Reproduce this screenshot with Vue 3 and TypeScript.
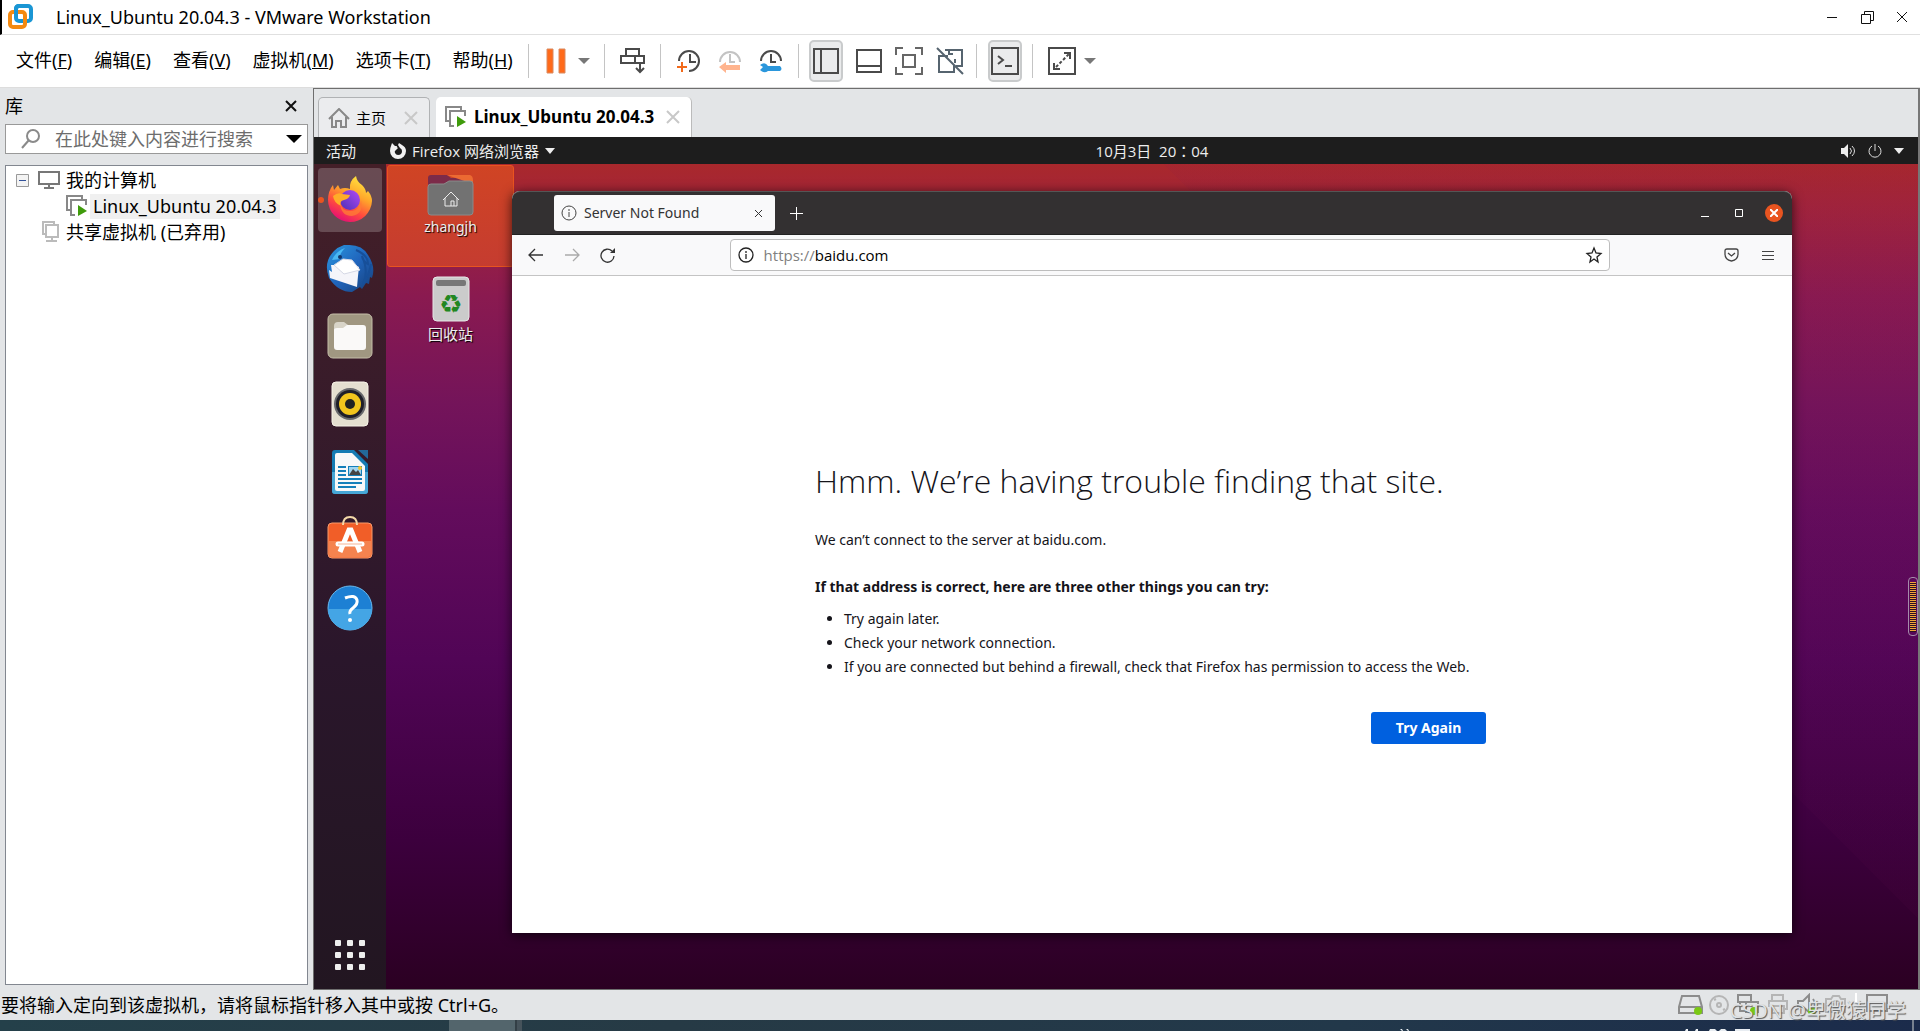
<script setup lang="ts">
import { ref } from 'vue'

interface MenuEntry {
  label: string
  hotkey: string
}

const menus: MenuEntry[] = [
  { label: '文件', hotkey: 'F' },
  { label: '编辑', hotkey: 'E' },
  { label: '查看', hotkey: 'V' },
  { label: '虚拟机', hotkey: 'M' },
  { label: '选项卡', hotkey: 'T' },
  { label: '帮助', hotkey: 'H' },
]

const tips: string[] = [
  'Try again later.',
  'Check your network connection.',
  'If you are connected but behind a firewall, check that Firefox has permission to access the Web.',
]

const search = ref('')
</script>

<template>
  <div class="app">
    <header class="titlebar">
      <svg class="logo" width="26" height="26" viewBox="0 0 26 26" fill="none">
        <rect x="8" y="2" width="15" height="15" rx="3" stroke="#1a96d4" stroke-width="4" />
        <rect x="2" y="8" width="15" height="15" rx="3" stroke="#f58a10" stroke-width="4" />
        <path d="M8 12V5q0-3 3-3h6" stroke="#1a96d4" stroke-width="4" />
      </svg>
      <h1>Linux_Ubuntu 20.04.3 - VMware Workstation</h1>
      <div class="wincontrols">
        <button aria-label="最小化"><svg width="12" height="12"><path d="M1 6.5h10" stroke="#111" /></svg></button>
        <button aria-label="还原"><svg width="14" height="14" fill="none" stroke="#111"><path d="M1.500 4.500h9v9h-9zM4.500 4.500v-3h9v9h-3" /></svg></button>
        <button aria-label="关闭"><svg width="12" height="12"><path d="M1 1l10 10M11 1L1 11" stroke="#111" /></svg></button>
      </div>
    </header>

    <nav class="menubar">
      <div class="menus">
        <button v-for="m in menus" :key="m.hotkey">{{ m.label }}(<u>{{ m.hotkey }}</u>)</button>
      </div>
      <div class="group">
        <button class="tool" aria-label="暂停"><svg width="26" height="26"><path d="M3 1h6v24H3zM15 1h6v24h-6z" fill="#ff6a1a" stroke="#d98a60" stroke-width="1" /></svg></button>
        <span class="caret"></span>
      </div>
      <div class="group">
        <button class="tool" aria-label="发送按键"><svg width="26" height="26" fill="none" stroke="#4a4a4a" stroke-width="2"><path d="M6 1h13v7H6zM1 8h14v7H1zM15 8h9v7h-9zM20 15v9M16 20l4 4 4-4" /></svg></button>
      </div>
      <div class="group clocks">
        <button class="tool" aria-label="拍摄快照"><svg width="26" height="26" fill="none" stroke-width="2"><path d="M3 13a10 10 0 1 1 10 10M14 6v8h6" stroke="#4a4a4a" /><path d="M1 19h10M6 14v10" stroke="#f26a1b" /></svg></button>
        <button class="tool" aria-label="恢复快照"><svg width="26" height="26" fill="none" stroke-width="2"><path d="M3 14a10 10 0 1 1 20 0M13 6v8h5" stroke="#c3c3c3" /><path d="M2 19l7-5v3h14v5H9v3z" fill="#ffb48e" /></svg></button>
        <button class="tool" aria-label="管理快照"><svg width="26" height="26" fill="none" stroke-width="2"><path d="M3 13a10 10 0 1 1 20 0M13 6v8h5" stroke="#4a4a4a" /><path d="M2 17l3 2-3 3q4 4 8 1h12q3-2 0-5H10q-3-5-8-1z" fill="#2b97dc" /></svg></button>
      </div>
      <div class="group views">
        <button class="tool pressed" aria-label="显示库"><svg width="26" height="26" fill="none" stroke="#4a4a4a" stroke-width="2"><path d="M1 1h24v24H1zM8 1v24" /></svg></button>
        <button class="tool" aria-label="缩略图"><svg width="26" height="26" fill="none" stroke="#4a4a4a" stroke-width="2"><path d="M1 2h24v22H1zM1 18h24" /></svg></button>
        <button class="tool" aria-label="全屏"><svg width="28" height="28" fill="none" stroke="#666" stroke-width="2"><path d="M1 8V1h7M20 1h7v7M27 20v7h-7M8 27H1v-7M8 8h12v12H8z" /></svg></button>
        <button class="tool" aria-label="Unity"><svg width="28" height="28" fill="none" stroke="#56646f" stroke-width="2"><path d="M9 3h17v16h-6M12 9H3v16h15v-7M1 1l26 26M13 3v4h4M19 12v4" /></svg></button>
      </div>
      <div class="group single">
        <button class="tool pressed" aria-label="控制台"><svg width="28" height="28" fill="none" stroke="#4a4a4a" stroke-width="2"><path d="M1 1h26v26H1zM7 9l5 4-5 4M14 19h7" /></svg></button>
      </div>
      <div class="group">
        <button class="tool" aria-label="拉伸"><svg width="28" height="28" fill="none" stroke="#4a4a4a" stroke-width="2"><path d="M1 1h26v26H1zM16 6h6v6M6 16v6h6" /><path d="M8 20L21 7" stroke-dasharray="3 2" /></svg></button>
        <span class="caret"></span>
      </div>
    </nav>

    <div class="workspace">
      <aside class="library">
        <div class="libhead">
          <h2>库</h2>
          <button aria-label="关闭库"><svg width="12" height="12"><path d="M1 1l10 10M11 1L1 11" stroke="#111" stroke-width="2" /></svg></button>
        </div>
        <label class="search">
          <svg width="22" height="22" fill="none" stroke="#8a8a8a" stroke-width="2"><circle cx="13" cy="8" r="6" /><path d="M9 12l-7 8" /></svg>
          <input v-model="search" type="text" placeholder="在此处键入内容进行搜索" aria-label="搜索" />
          <span class="drop"></span>
        </label>
        <ul class="tree">
          <li>
            <svg class="expander" width="13" height="13"><path d="M.5.5h12v12H.5z" fill="#f3f3f3" stroke="#999" /><path d="M3 6.500h7" stroke="#33529a" /></svg>
            <svg width="22" height="18" fill="none" stroke="#777" stroke-width="2"><path d="M1 1h20v12H1zM11 13v3M6 17h10" /></svg>
            <span>我的计算机</span>
          </li>
          <li class="vm">
            <svg width="22" height="22" fill="none" stroke="#888" stroke-width="2"><path d="M4 15H1V1h15v3M9 20H5V5h15v5" /><path d="M12 10l9 6-9 5z" fill="#3f9b0b" stroke="none" /></svg>
            <span class="selected">Linux_Ubuntu 20.04.3</span>
          </li>
          <li class="shared">
            <svg width="18" height="22" fill="none" stroke="#bbb" stroke-width="2"><path d="M4 13H1V1h11v3M4 4h12v12H4zM10 16v4M4 20h11" /></svg>
            <span>共享虚拟机 (已弃用)</span>
          </li>
        </ul>
      </aside>

      <main class="console">
        <div class="tabs">
          <div class="tab home">
            <svg width="22" height="20" fill="none" stroke="#888" stroke-width="2"><path d="M1 11L11 1l10 10M4 9v10h4v-6h5v6h5V9" /></svg>
            <span>主页</span>
            <button aria-label="关闭主页"><svg width="14" height="14"><path d="M1 1l12 12M13 1L1 13" stroke="#c8c8c8" stroke-width="2" /></svg></button>
          </div>
          <div class="tab active">
            <svg width="22" height="22" fill="none" stroke="#888" stroke-width="2"><path d="M4 15H1V1h15v3M9 20H5V5h15v5" /><path d="M12 10l9 6-9 5z" fill="#3f9b0b" stroke="none" /></svg>
            <span>Linux_Ubuntu 20.04.3</span>
            <button aria-label="关闭标签"><svg width="14" height="14"><path d="M1 1l12 12M13 1L1 13" stroke="#c8c8c8" stroke-width="2" /></svg></button>
          </div>
        </div>

        <div class="guest">
          <div class="panel">
            <div class="panelside">
              <span>活动</span>
              <span class="appmenu">
                <svg width="16" height="16" viewBox="0 0 16 16"><path fill="#f2f2f2" fill-rule="evenodd" d="M1 3l1-3 3 3h2q-1 1 1 2L6 7q-2 1-1 3 1 2 3 2 4 0 4-4 0-2-2-3L8 2l1-2 3 2q4 2 4 6a8 8 0 0 1-16 0Q0 5 1 3z" /></svg>
                Firefox 网络浏览器
                <svg width="10" height="6"><path d="M0 0h10L5 6z" fill="#eee" /></svg>
              </span>
            </div>
            <time>10月3日&nbsp; 20：04</time>
            <div class="panelside right">
              <svg width="15" height="14" fill="none" stroke="#ddd"><path d="M0 4h3l4-4v14L3 10H0z" fill="#eee" stroke="none" /><path d="M9 4q3 3 0 6M11 2q5 5 0 10" /></svg>
              <svg width="14" height="14" fill="none" stroke="#ddd"><path d="M4 2a6 6 0 1 0 6 0M7 0v7" /></svg>
              <svg width="10" height="6"><path d="M0 0h10L5 6z" fill="#eee" /></svg>
            </div>
          </div>

          <div class="session">
            <nav class="dock">
              <button class="running" aria-label="Firefox">
                <svg width="48" height="48" viewBox="0 0 48 48">
                  <defs>
                    <linearGradient id="fx" x1=".8" y1="0" x2=".3" y2="1"><stop offset="0" stop-color="#ffec42" /><stop offset=".4" stop-color="#ffa52a" /><stop offset=".7" stop-color="#ff4b3e" /><stop offset="1" stop-color="#e30a78" /></linearGradient>
                    <linearGradient id="fp" x1="0" y1="1" x2="1" y2="0"><stop offset="0" stop-color="#4b30b5" /><stop offset="1" stop-color="#b249f7" /></linearGradient>
                  </defs>
                  <path d="M24 46A22 22 0 0 1 2 24Q2 15 7 9l1 5 4-5 2 4q5-2 10 0-1-8 6-13 1 6 6 9 4 4 4 8l2-2q4 5 4 10A22 22 0 0 1 24 46z" fill="url(#fx)" />
                  <circle cx="24" cy="24" r="10" fill="url(#fp)" />
                  <path d="M7 20q5-4 9-2l8 1q-1 4-6 5-5 1-3 6-7-3-8-10z" fill="#ffad28" />
                  <path d="M14 25q1 11 12 10 8-1 9-11 3 14-9 16-12 0-12-15z" fill="#ff7b35" opacity=".8" />
                </svg>
              </button>
              <button aria-label="Thunderbird">
                <svg width="48" height="48" viewBox="0 0 48 48">
                  <defs><linearGradient id="tb" x1="0" y1="0" x2="1" y2="1"><stop offset="0" stop-color="#2b98df" /><stop offset=".5" stop-color="#2065bd" /><stop offset="1" stop-color="#174079" /></linearGradient></defs>
                  <path d="M3 34Q-3 18 8 7q4-4 10-6l3 0q15-1 21 10 8 12 4 23l-2-1-1 7-3-1-4 6-2-2-8 5q-14 0-23-14z" fill="url(#tb)" />
                  <path d="M5 21l5 0 8-6 15 8-1 9-1 11L4 34l-1-8 3 2z" fill="#f5f5fa" />
                  <path d="M8 21l10 9 16-4-8-10-9-1z" fill="#fff" stroke="#d5d8e5" />
                  <path d="M6 16q4-9 13-12-6 6-5 11z" fill="#49b8f3" /><circle cx="14" cy="13" r="2" fill="#12366d" />
                  <path d="M30 6q12 5 12 14-5-2-6-8 7 16 1 28 6-8 8-20" fill="none" stroke="#174f99" stroke-width="2" />
                </svg>
              </button>
              <button aria-label="文件">
                <svg width="48" height="48" viewBox="0 0 48 48"><rect x="2" y="2" width="44" height="44" rx="5" fill="#a09781" stroke="#c5bea9" /><path d="M8 14q0-4 4-4h6l4 3h13q4 0 4 5v4H8z" fill="#d8d4c8" /><path d="M8 18q0-2 3-2h6l4-3h16q3 0 3 3v19q0 3-3 3H11q-3 0-3-3z" fill="#faf9f8" /></svg>
              </button>
              <button aria-label="Rhythmbox">
                <svg width="48" height="48" viewBox="0 0 48 48"><rect x="6" y="2" width="36" height="44" rx="4" fill="#e4dfd0" stroke="#f7f3e8" /><circle cx="24" cy="24" r="16" fill="#68696c" /><circle cx="24" cy="24" r="14" fill="#1f1f29" /><circle cx="24" cy="24" r="11" fill="#f2c51d" /><circle cx="24" cy="24" r="5" fill="#222" /></svg>
              </button>
              <button aria-label="Writer">
                <svg width="48" height="48" viewBox="0 0 48 48"><path d="M6 5q0-3 3-3h19l14 14v27q0 3-3 3H9q-3 0-3-3z" fill="#157bb3" /><path d="M6 24h36v19q0 3-3 3H9q-3 0-3-3z" fill="#46a7d7" /><path d="M9 7q0-2 2-2h15l13 13v23q0 2-2 2H11q-2 0-2-2z" fill="#f8f8f8" /><path d="M32 2h10v9z" fill="#23699a" /><path d="M12 19h8M12 23h8M12 27h8M12 31h24M12 35h24M12 39h18" stroke="#147fba" stroke-width="2" /><path d="M22 18h14v10H22z" fill="#147fba" /><path d="M23 19h12v8H23z" fill="#9fd5f0" /><path d="M23 27l4-6 3 3 2-2 3 5z" fill="#444" /><circle cx="34" cy="20" r="2" fill="#f5c92b" /></svg>
              </button>
              <button aria-label="Ubuntu Software">
                <svg width="48" height="48" viewBox="0 3 48 48"><rect x="2" y="10" width="44" height="35" rx="4" fill="#f15e28" stroke="#f89a6b" /><path d="M3 28h42v13q0 3-3 3H6q-3 0-3-3z" fill="#f5834f" /><path d="M17 12q0-8 7-8t7 8" fill="none" stroke="#f3d8a8" stroke-width="2" /><path d="M14 39l9-22h2l9 22" fill="none" stroke="#fff" stroke-width="5" /><path d="M12 31h24" stroke="#fff" stroke-width="5" stroke-linecap="round" /><path d="M12 31h24" stroke="#f5b597" /></svg>
              </button>
              <button aria-label="帮助">
                <svg width="48" height="48" viewBox="0 0 48 48"><circle cx="24" cy="24" r="22" fill="#1d80d4" stroke="#69b9ed" /><path d="M2 25h44a22 21 0 0 1-44 0z" fill="#44a5e5" /><path d="M19 14q10-4 12 2 1 4-4 8-4 3-3 6" fill="none" stroke="#fff" stroke-width="3" /><circle cx="24" cy="36" r="2" fill="#fff" /></svg>
              </button>
              <button class="grid" aria-label="显示应用程序"><i v-for="n in 9" :key="n"></i></button>
            </nav>

            <div class="desktop">
              <div class="shortcut chosen">
                <svg width="48" height="42" viewBox="0 0 48 42"><path d="M1 4q0-3 3-3h16l4 3h19q3 0 3 3v20H1z" fill="#7c2b49" /><path d="M20 1h23q3 1 3 5v4z" fill="#ec6a32" /><path d="M1 13q0-3 3-3h13l5-3h21q3 0 3 3v28q0 3-3 3H4q-3 0-3-3z" fill="#727272" stroke="#8a8a8a" /><path d="M16 26l8-8 8 8M18 24v8h12v-8M24 32v-5h3v5" fill="none" stroke="#ececec" stroke-width="1" /></svg>
                <span>zhangjh</span>
              </div>
              <div class="shortcut">
                <svg width="38" height="46" viewBox="0 0 38 46"><rect x="1" y="1" width="36" height="44" rx="4" fill="#cbcbcb" stroke="#e6e6e6" /><rect x="4" y="4" width="30" height="6" rx="2" fill="#777" /><text class="recycle" x="19" y="37" text-anchor="middle">♻</text></svg>
                <span>回收站</span>
              </div>

              <section class="browser">
                <div class="btitle">
                  <div class="btab">
                    <svg width="16" height="16" fill="none" stroke="#444"><circle cx="8" cy="8" r="7" /><path d="M8 7v5M8 4v2" /></svg>
                    <span>Server Not Found</span>
                    <button aria-label="Close tab"><svg width="9" height="9"><path d="M1 1l7 7M8 1L1 8" stroke="#333" /></svg></button>
                  </div>
                  <button class="newtab" aria-label="New tab"><svg width="13" height="13"><path d="M0 6.500h13M6.500 0v13" stroke="#fff" stroke-width="1" /></svg></button>
                  <div class="bcontrols">
                    <button aria-label="Minimize"><svg width="10" height="10"><path d="M1 8.500h8" stroke="#fff" /></svg></button>
                    <button aria-label="Maximize"><svg width="10" height="10"><path d="M1.500 1.500h7v7h-7z" stroke="#fff" fill="none" /></svg></button>
                    <button class="bclose" aria-label="Close"><svg width="8" height="8"><path d="M0 0l8 8M8 0L0 8" stroke="#fff" stroke-width="2" /></svg></button>
                  </div>
                </div>
                <div class="btoolbar">
                  <div class="navbtns">
                    <button aria-label="Back"><svg width="16" height="14" fill="none" stroke="#333" stroke-width="1.300"><path d="M15 7H1M7 1L1 7l6 6" /></svg></button>
                    <button aria-label="Forward"><svg width="16" height="14" fill="none" stroke="#aaa" stroke-width="1.300"><path d="M1 7h14M9 1l6 6-6 6" /></svg></button>
                    <button aria-label="Reload"><svg width="16" height="16" fill="none" stroke="#333" stroke-width="1.300"><path d="M14 9A6.500 6.500 0 1 1 12 4" /><path d="M15 1v5h-5z" fill="#333" stroke="none" /></svg></button>
                  </div>
                  <div class="urlbar">
                    <svg width="16" height="16" fill="none" stroke="#222" stroke-width="1.300"><circle cx="8" cy="8" r="7" /><path d="M8 7v5M8 4v2" /></svg>
                    <a href="https://baidu.com"><span>https://</span>baidu.com</a>
                    <button aria-label="Bookmark"><svg width="18" height="18" fill="none" stroke="#222" stroke-width="1.300"><path d="M9 2l2 5 5 .5-4 3.500 1 5-4-3-4 3 1-5-4-3.500 5-.5z" /></svg></button>
                  </div>
                  <div class="extras">
                    <button aria-label="Pocket"><svg width="16" height="14" fill="none" stroke="#444" stroke-width="1.300"><path d="M1 3q0-2 2-2h9q2 0 2 2v3q0 6-6.500 7Q1 12 1 6zM4 5l3.500 3L11 5" /></svg></button>
                    <button aria-label="Menu"><svg width="12" height="11"><path d="M0 1.500h12M0 5.500h12M0 9.500h12" stroke="#444" /></svg></button>
                  </div>
                </div>
                <article class="page">
                  <div class="error">
                    <h3>Hmm. We’re having trouble finding that site.</h3>
                    <p>We can’t connect to the server at baidu.com.</p>
                    <p class="strong">If that address is correct, here are three other things you can try:</p>
                    <ul>
                      <li v-for="t in tips" :key="t">{{ t }}</li>
                    </ul>
                    <button class="retry">Try Again</button>
                  </div>
                </article>
              </section>
              <div class="meter"></div>
            </div>
          </div>
        </div>
      </main>
    </div>

    <footer class="status">
      <span>要将输入定向到该虚拟机，请将鼠标指针移入其中或按 Ctrl+G。</span>
      <div class="devices">
        <svg width="210" height="24" fill="none" stroke="#8c8c8c" stroke-width="2">
          <path d="M4 3h17l3 11v6H1v-6zM1 14h23" /><circle cx="20" cy="18" r="4" fill="#7ac814" stroke="none" />
          <g stroke="#b5b5b5"><circle cx="41" cy="12" r="9" /><circle cx="41" cy="12" r="2" /><path d="M36 7l2-1M45 17l2-1" /></g>
          <path d="M60 2h13v7H60zM68 9h12v10H68zM62 9v9h6" /><circle cx="76" cy="18" r="4" fill="#7ac814" stroke="none" />
          <g stroke="#b5b5b5"><path d="M94 8V2h11v6M91 14V8h18v8h-3M94 13h12v7H94z" /></g>
          <path d="M120 8h5l6-6v17l-6-5h-5zM135 6q4 5 0 10" /><circle cx="134" cy="18" r="4" fill="#7ac814" stroke="none" />
          <g stroke="#b5b5b5"><path d="M148 6h5l2-3h6l2 3h4v13h-19z" /><circle cx="158" cy="12" r="4" /></g>
          <path d="M178 0v22" stroke="#fff" /><path d="M189 2h20v16h-20z" />
        </svg>
        <span class="watermark">CSDN @卑微猿同学</span>
      </div>
    </footer>
    <div class="taskbar">
      <i class="thumb"></i>
      <svg class="tray" width="360" height="2" fill="#e8edf2"><path d="M2 0h2l1 2H4zM8 0h2l1 2h-1zM288 0h2v2h-3zM298 0h2v2h-3zM312 0h5l2 2h-8zM323 0h4l2 2h-8zM337 0h15v2h-15z" /></svg>
      <i class="peek"></i>
    </div>
  </div>
</template>

<style>
html,
body {
  background: #e3e5e7;
}
</style>

<style scoped>
* {
  box-sizing: border-box;
}
.app {
  display: flex;
  flex-direction: column;
  min-height: 100vh;
  color: #000;
  font-family: 'Noto Sans', 'Noto Sans CJK SC', sans-serif;
  font-size: 18px;
  line-height: 24px;
}
button {
  display: flex;
  align-items: center;
  justify-content: center;
  padding: 0;
  border: 0;
  background: none;
  color: inherit;
  font: inherit;
}
h1, h2, h3, p, ul {
  margin: 0;
  padding: 0;
  font-weight: 400;
}
svg {
  display: block;
  flex: none;
}
.titlebar {
  display: flex;
  align-items: center;
  height: 35px;
  padding-left: 6px;
  background: #fff;
  border-left: 2px solid #000;
  border-bottom: 1px solid #e0e0e0;
}
.titlebar h1 {
  flex: 1;
  margin-left: 22px;
  font-size: 18px;
}
.wincontrols {
  display: flex;
  gap: 22px;
  margin-right: 12px;
}
.menubar {
  display: flex;
  align-items: center;
  height: 53px;
  padding-left: 16px;
  background: #fff;
  border-bottom: 1px solid #ddd;
}
.menus {
  display: flex;
  gap: 22px;
  margin-right: 15px;
  padding-bottom: 2px;
}
.menus button {
  white-space: nowrap;
}
.group {
  display: flex;
  align-items: center;
  height: 34px;
  padding: 0 14px 0 15px;
  border-left: 1px solid #c4c4c4;
}
.clocks {
  gap: 15px;
}
.views {
  gap: 13px;
  padding-left: 10px;
  padding-right: 12px;
}
.single {
  padding: 0 10px 0 11px;
}
.group .pressed {
  width: 34px;
  height: 42px;
  border: 2px solid #c9cbcc;
  border-radius: 5px;
  background: #eaebec;
}
.caret {
  margin-left: 8px;
  border: 6px solid transparent;
  border-top-color: #777;
  border-bottom: 0;
}
.workspace {
  display: flex;
  flex: 1;
}
.library {
  display: flex;
  flex-direction: column;
  width: 313px;
  padding: 0 5px 5px;
}
.libhead {
  display: flex;
  align-items: center;
  justify-content: space-between;
  height: 36px;
  padding-right: 11px;
}
.libhead h2 {
  font-size: 18px;
}
.search {
  display: flex;
  align-items: center;
  height: 30px;
  padding: 0 5px 0 14px;
  border: 1px solid #999;
  background: #fff;
}
.search input {
  flex: 1;
  min-width: 0;
  margin-left: 13px;
  padding: 0;
  border: 0;
  outline: 0;
  font: inherit;
}
.search input::placeholder {
  color: #6d6d6d;
}
.drop {
  border: 8px solid transparent;
  border-top-color: #000;
  border-bottom: 0;
}
.tree {
  flex: 1;
  margin-top: 11px;
  padding: 1px 10px;
  border: 1px solid #828790;
  background: #fff;
  list-style: none;
}
.tree li {
  display: flex;
  align-items: center;
  height: 26px;
  white-space: nowrap;
}
.tree .expander {
  margin-right: 9px;
}
.tree span {
  margin-left: 6px;
}
.tree .vm {
  padding-left: 50px;
}
.tree .shared {
  padding-left: 26px;
}
.tree .selected {
  padding: 0 3px 1px;
  margin-left: 2px;
  background: #f0f0f0;
}
.console {
  display: flex;
  flex: 1;
  flex-direction: column;
  min-width: 0;
  border: 1px solid #6e6e6e;
  border-right: 2px solid #777;
}
.tabs {
  display: flex;
  align-items: flex-end;
  gap: 6px;
  height: 48px;
  padding-left: 4px;
}
.tab {
  display: flex;
  align-items: center;
  height: 40px;
  padding: 0 11px 0 9px;
  border-radius: 5px 5px 0 0;
  background: #fff;
  border-right: 1px solid #bbb;
}
.home {
  border: 1px solid #b0b2b4;
  border-bottom: 0;
  background: #ebecee;
}
.tab span {
  margin: 0 18px 0 6px;
  font-size: 15px;
}
.tab.active span {
  margin: 0 12px 0 7px;
  font-size: 17px;
  font-weight: 700;
}
.guest {
  display: flex;
  flex: 1;
  flex-direction: column;
  color: #eee;
  font-size: 15px;
}
.panel {
  display: flex;
  align-items: center;
  height: 27px;
  padding: 0 14px 0 12px;
  background: #1d1d1d;
}
.panel time {
  margin-left: 74px;
  font-family: 'Open Sans', 'Noto Sans CJK TC', sans-serif;
}
.panelside {
  display: flex;
  flex: 1;
  align-items: center;
  gap: 34px;
  font-family: 'Open Sans', 'Noto Sans CJK SC', sans-serif;
}
.panelside.right {
  justify-content: flex-end;
  gap: 12px;
}
.appmenu {
  display: flex;
  align-items: center;
  gap: 6px;
}
.session {
  display: flex;
  flex: 1;
}
.dock {
  display: flex;
  flex-direction: column;
  align-items: center;
  gap: 4px;
  width: 72px;
  padding: 4px 0 16px;
  background: linear-gradient(#441f28, #331a2b 40%, #2a162b 60%, #221621);
}
.dock button {
  width: 64px;
  height: 64px;
  border-radius: 4px;
}
.running {
  position: relative;
  background: rgba(255, 255, 255, 0.2);
}
.running::before {
  content: '';
  position: absolute;
  left: 0;
  width: 6px;
  height: 6px;
  border-radius: 3px;
  background: #e95420;
}
.dock .grid {
  display: grid;
  grid-template-columns: repeat(3, 6px);
  gap: 6px;
  align-content: center;
  height: 36px;
  margin-top: auto;
}
.grid i {
  height: 6px;
  border-radius: 1px;
  background: #eee;
}
.desktop {
  position: relative;
  flex: 1;
  padding: 1px;
  background:
    linear-gradient(45deg, transparent 68%, rgba(120, 20, 90, 0.06) 68%),
    linear-gradient(#a9282c, #a2243a 5%, #8a1a50 16%, #74145a 29%, #630c5c 42%, #510556 60%, #3c003d 82%, #2b0022);
}
.shortcut {
  display: flex;
  flex-direction: column;
  align-items: center;
  width: 127px;
  height: 102px;
  margin-bottom: 8px;
  padding-top: 8px;
  border: 1px solid transparent;
  line-height: 20px;
  text-shadow: 1px 1px 1px #000;
}
.shortcut + .shortcut {
  padding-top: 0;
}
.shortcut + .shortcut span {
  margin-top: 2px;
}
.recycle {
  fill: #218721;
  font-family: 'DejaVu Sans', sans-serif;
  font-size: 26px;
  text-shadow: none;
}
.chosen {
  border-color: #e9541f;
  border-radius: 3px;
  background: linear-gradient(#d04424, #c53c30);
  font-size: 14px;
}
.chosen span {
  margin-top: 1px;
}
.browser {
  position: absolute;
  inset: 27px 126px 56px;
  display: flex;
  flex-direction: column;
  border-radius: 8px 8px 0 0;
  background: #fff;
  box-shadow: 0 2px 12px rgba(0, 0, 0, 0.7);
  color: #15141a;
}
.btitle {
  display: flex;
  align-items: center;
  height: 44px;
  padding: 0 9px 0 42px;
  border-top: 1px solid #555;
  border-bottom: 1px solid #222;
  border-radius: 8px 8px 0 0;
  background: #333031;
}
.btab {
  display: flex;
  align-items: center;
  width: 221px;
  height: 36px;
  padding: 0 12px 0 7px;
  border-radius: 3px;
  background: #f9f9fa;
  color: #333;
  font-size: 14px;
}
.btab span {
  flex: 1;
  margin-left: 7px;
}
.newtab {
  margin-left: 15px;
}
.bcontrols {
  display: flex;
  align-items: center;
  gap: 24px;
  margin-left: auto;
}
.bcontrols .bclose {
  width: 18px;
  height: 18px;
  margin-left: -3px;
  border-radius: 9px;
  background: #e95420;
}
.btoolbar {
  display: flex;
  align-items: center;
  height: 41px;
  border-bottom: 1px solid #c4c4c4;
  background: #f9f9fa;
}
.navbtns {
  display: flex;
  flex: 0 0 17%;
  gap: 20px;
  padding-left: 16px;
}
.urlbar {
  display: flex;
  flex: 1;
  align-items: center;
  height: 32px;
  padding: 0 6px 0 7px;
  border: 1px solid #bdbdbd;
  border-radius: 4px;
  background: #fff;
}
.urlbar a {
  flex: 1;
  margin-left: 10px;
  color: #000;
  font-family: 'Open Sans', sans-serif;
  text-decoration: none;
}
.urlbar a span {
  color: #808080;
}
.extras {
  display: flex;
  flex: 0 0 182px;
  justify-content: flex-end;
  gap: 22px;
  padding-right: 18px;
}
.page {
  display: flex;
  flex: 1;
  align-items: center;
  justify-content: center;
  padding-bottom: 6px;
}
.error {
  display: flex;
  flex-direction: column;
  width: 674px;
  font-size: 14px;
}
.error h3 {
  margin-bottom: 25px;
  font-family: 'Open Sans', sans-serif;
  font-size: 32px;
  line-height: 44px;
  font-weight: 300;
}
.error p {
  margin-bottom: 23px;
}
.error .strong {
  margin-bottom: 8px;
  font-weight: 700;
}
.error ul {
  padding-left: 29px;
}
.error li {
  white-space: nowrap;
}
.error .retry {
  align-self: flex-end;
  width: 115px;
  height: 32px;
  margin: 33px 3px 0 0;
  border-radius: 3px;
  background: #0060df;
  color: #fff;
  font-weight: 700;
}
.meter {
  position: absolute;
  right: 0;
  top: 50%;
  width: 10px;
  height: 59px;
  border: 1px solid #a58bab;
  border-radius: 4px;
  background: repeating-linear-gradient(#f2a43a 0 1px, #2c1020 1px 2px) content-box #240a24;
  padding: 4px 1px 3px;
}
.status {
  display: flex;
  align-items: center;
  justify-content: space-between;
  height: 30px;
  padding: 0 14px 0 1px;
}
.devices {
  position: relative;
  width: 228px;
}
.watermark {
  position: absolute;
  right: 0;
  top: 6px;
  color: #dfe1e3;
  font-family: 'Open Sans', 'Noto Sans CJK SC', sans-serif;
  font-size: 20px;
  text-shadow: 1px 1px 1px #555;
  white-space: nowrap;
}
.taskbar {
  display: flex;
  align-items: flex-end;
  height: 11px;
  background: linear-gradient(90deg, #24404a, #263a45 35%, #22384a 70%, #1b2b4b);
}
.thumb {
  width: 73px;
  height: 11px;
  margin-left: 449px;
  border-right: 5px solid #46535b;
  background: linear-gradient(90deg, #53656c 66px, #333f46 66px);
}
.tray {
  margin-left: auto;
  margin-right: 154px;
}
.peek {
  width: 2px;
  height: 11px;
  margin-right: 6px;
  background: #77818f;
}
</style>
